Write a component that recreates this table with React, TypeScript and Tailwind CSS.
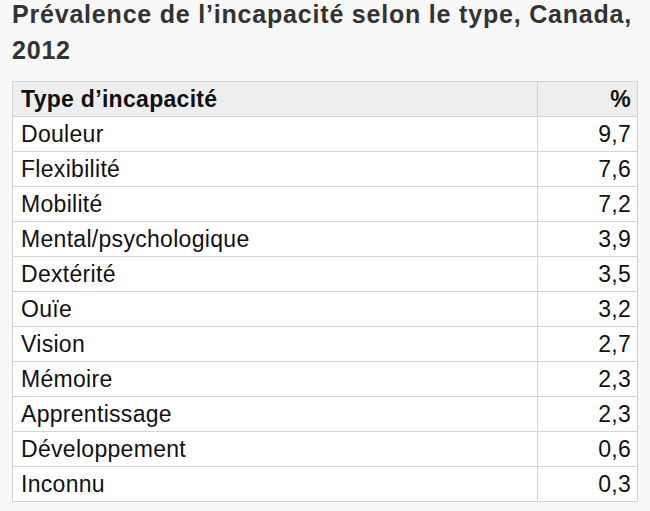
import React from 'react';

const rows: [string, string][] = [
  ['Douleur', '9,7'],
  ['Flexibilité', '7,6'],
  ['Mobilité', '7,2'],
  ['Mental/psychologique', '3,9'],
  ['Dextérité', '3,5'],
  ['Ouïe', '3,2'],
  ['Vision', '2,7'],
  ['Mémoire', '2,3'],
  ['Apprentissage', '2,3'],
  ['Développement', '0,6'],
  ['Inconnu', '0,3'],
];

export default function App() {
  return (
    <div className="w-[650px] h-[511px] bg-[#f8f8f8] px-3 font-['Liberation_Sans',Arial,sans-serif] overflow-hidden">
      <h2 className="-mt-[4px] text-[25px] leading-[36px] tracking-[0.8px] font-bold text-[#333]">
        Prévalence de l’incapacité selon le type, Canada, 2012
      </h2>
      <table className="mt-[13px] w-[626px] border-collapse bg-white text-[23px] leading-[34px] tracking-[0.3px] text-[#111]">
        <thead>
          <tr className="bg-[#eeeeee]">
            <th className="h-[35px] border border-[#d4d4d4] pl-2 pr-[6px] text-left font-bold">Type d’incapacité</th>
            <th className="w-[100px] h-[35px] border border-[#d4d4d4] pl-2 pr-[6px] text-right font-bold">%</th>
          </tr>
        </thead>
        <tbody>
          {rows.map(([label, value]) => (
            <tr key={label}>
              <td className="h-[35px] border border-[#d4d4d4] pl-2 pr-[6px]">{label}</td>
              <td className="h-[35px] border border-[#d4d4d4] pl-2 pr-[6px] text-right">{value}</td>
            </tr>
          ))}
        </tbody>
      </table>
    </div>
  );
}
